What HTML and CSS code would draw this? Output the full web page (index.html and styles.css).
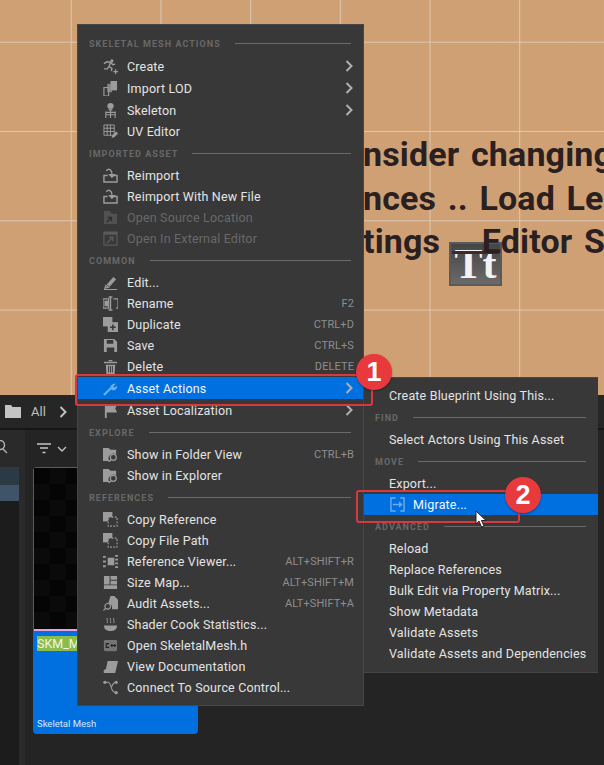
FILE: index.html
```html
<!DOCTYPE html>
<html lang="en">
<head>
<meta charset="utf-8">
<title>Asset Actions</title>
<link rel="stylesheet" href="styles.css">
</head>
<body>
<svg class="defs" width="0" height="0">
  <symbol id="i-create" viewBox="0 0 16 16"><circle cx="9.500" cy="2" r="1.700"/><path d="M1 5l3-2 4 .5 2.500 2.500 2.500-.5M8 3.500L6.500 8l3 2-.5 3M6.500 8l-2 2.500H1" fill="none" stroke-width="1.500"/><path d="M13.500 11v5M11 13.500h5" fill="none" stroke-width="1.300"/></symbol>
  <symbol id="i-lod" viewBox="0 0 16 16"><rect x="8" y="0" width="7" height="10"/><rect x="4.500" y="3" width="5" height="9" opacity=".75"/><rect x="1" y="7" width="5" height="9" fill="none" stroke-width="1.200"/></symbol>
  <symbol id="i-skel" viewBox="0 0 16 16"><ellipse cx="8" cy="3.300" rx="3.400" ry="3.200"/><rect x="6" y="6.500" width="4" height="1.500"/><path d="M3 10h10M3 12.500h10M8 8v8M3 9v7M13 9v7" fill="none" stroke-width="1.200"/></symbol>
  <symbol id="i-uv" viewBox="0 0 16 16"><path d="M1 1h11v11H1zM1 4.500h11M1 8h11M4.500 1v11M8 1v11" fill="none" stroke-width="1"/><path d="M9 15l1-3 4-4 2 2-4 4z"/></symbol>
  <symbol id="i-reimport" viewBox="0 0 16 16"><path d="M5 8H1v7h14V8h-4" fill="none" stroke-width="1.500"/><path d="M3.500 3C6 0 9.500 1.500 9.500 6" fill="none" stroke-width="1.500"/><path d="M5.500 6.500h8L9.500 11z"/></symbol>
  <symbol id="i-folderopen" viewBox="0 0 16 16"><path d="M1 1h6l2 3h6v11H1z" opacity=".75"/><path d="M4 13l5-5M5 8h4v4" fill="none" stroke="#2f2f2f" stroke-width="1.400"/></symbol>
  <symbol id="i-external" viewBox="0 0 16 16"><path d="M1 1h14v14H1z" fill="none" stroke-width="1.200"/><path d="M1 1h14v3H1z"/><path d="M4 13l6-6M6 6.500h4.500V11" fill="none" stroke-width="1.500"/></symbol>
  <symbol id="i-edit" viewBox="0 0 16 16"><path d="M4 10L11 2l3 2.500-7 8z"/><path d="M3 11l3 2-4 1zM1 15.500h14" fill="none" stroke-width="1.200"/></symbol>
  <symbol id="i-rename" viewBox="0 0 16 16"><path d="M6 3H0v10h6zM11 3h5v10h-2" fill="none" stroke-width="1.300"/><rect x="1.500" y="5" width="4" height="6"/><path d="M6 1h4M6 15h4M8 1v14" fill="none" stroke-width="1.500"/></symbol>
  <symbol id="i-dup" viewBox="0 0 16 16"><rect x="0" y="0" width="10" height="10"/><rect x="5" y="5.500" width="11" height="10.500" stroke="#383838"/><path d="M10.500 8v6M7.500 11h6" fill="none" stroke="#383838" stroke-width="1.600"/></symbol>
  <symbol id="i-save" viewBox="0 0 16 16"><path d="M1 1h11l3 3v11H1zM4 2v4h7V2zM4 10v5h8v-5z" fill-rule="evenodd"/></symbol>
  <symbol id="i-trash" viewBox="0 0 16 16"><path d="M1 3h14v1.500H1zM6 1h4v1.500H6zM3 6h10l-.6 10H3.600zM5.500 7.500v7h1v-7zM7.500 7.500v7h1v-7zM9.500 7.500v7h1v-7z" fill-rule="evenodd"/></symbol>
  <symbol id="i-wrench" viewBox="0 0 16 16"><path d="M1 15l7.500-7.500" fill="none" stroke-width="2.400"/><path d="M8 8c-1-3 2-6 6-5l-3 2.500 1.500 1.500L15 5c.5 4-3 5.500-5.500 4.500z"/></symbol>
  <symbol id="i-flag" viewBox="0 0 16 16"><path d="M2 1h2v15H2zM4 2h11l-2 3.500L15 10H4z"/></symbol>
  <symbol id="i-foldersearch" viewBox="0 0 16 16"><path d="M0 1h6l2 2h6v5a5 5 0 0 0-7 7H0z"/><circle cx="11" cy="11" r="3.200" fill="none" stroke-width="1.300"/><path d="M8.500 13.500L6 16" fill="none" stroke-width="1.500"/></symbol>
  <symbol id="i-copy" viewBox="0 0 16 16"><rect x="0" y="0" width="10" height="10"/><path d="M5.500 5.500H15V15H5.500z" fill="#383838" stroke-dasharray="2 1.500" stroke-width="1.200"/></symbol>
  <symbol id="i-refview" viewBox="0 0 16 16"><rect x="5" y="4" width="7" height="8"/><path d="M0 3h3M0 8h3M0 13h3M13 2h3M13 6h3M13 10h3M13 14h3" fill="none" stroke-width="2"/></symbol>
  <symbol id="i-sizemap" viewBox="0 0 16 16"><path d="M1 1h6v9H1zM8 1h7v4H8zM8 6h7v4H8zM1 11h14v4H1z"/></symbol>
  <symbol id="i-audit" viewBox="0 0 16 16"><path d="M8 0h4l4 4v10H9.500c1-3-1-6-4-6z"/><circle cx="5" cy="11" r="3" fill="none" stroke-width="1.200"/><path d="M3 13l-2.500 2.500" fill="none" stroke-width="1.300"/></symbol>
  <symbol id="i-shader" viewBox="0 0 16 16"><path d="M1 9h14c0 4-3 6-7 6S1 13 1 9z"/><path d="M4.500 1c-1 2 1 3 0 5.500M8 1c-1 2 1 3 0 5.500M11.500 1c-1 2 1 3 0 5.500" fill="none" stroke-width="1"/></symbol>
  <symbol id="i-cpp" viewBox="0 0 16 16"><rect x="1" y="2" width="14" height="12" rx="1.500" opacity=".6" stroke="none"/><path d="M6.500 6H3.500v4h3M8 8h6M9.500 6.500v3M12.500 6.500v3" fill="none" stroke="#222" stroke-width="1.200"/></symbol>
  <symbol id="i-doc" viewBox="0 0 16 16"><path d="M5 2h11l-2 9H3zM1 15c-1-2 0-4 2-4h11l-1 4z"/><path d="M3 13h10" stroke="#383838" fill="none"/></symbol>
  <symbol id="i-source" viewBox="0 0 16 16"><circle cx="2" cy="2.500" r="1.800"/><circle cx="14" cy="2.500" r="1.800"/><circle cx="14" cy="13.500" r="1.800"/><path d="M2 2.500h3c5 0 2 11 9 11M14 2.500C10 2.500 10 7 8.500 8" fill="none" stroke-width="1.100"/></symbol>
  <symbol id="i-migrate" viewBox="0 0 16 16"><path d="M6 1H1v14h5M11 1h4v14h-4" fill="none" stroke-width="1.500"/><path d="M3 8h8" fill="none" stroke-width="1.600"/><path d="M9.500 4.500L13.500 8l-4 3.500z"/></symbol>
  <symbol id="i-arrow" viewBox="0 0 9 12"><path d="M1.500 1l5 5-5 5" fill="none" stroke-width="2"/></symbol>
</svg>

<div class="stage">
  <section class="viewport">
    <div class="type-thumb"><span class="type-glyph">Tt</span></div>
    <div class="note">
      <p class="note-line">nsider changing</p>
      <p class="note-line">nces .. Load Le</p>
      <p class="note-line">tings <span class="note-gap">Editor S</span></p>
    </div>
  </section>

  <section class="browser">
    <header class="crumbs">
      <svg class="crumb-folder" viewBox="0 0 16 13"><path d="M0 0h6l1.500 2H16V13H0z"/></svg>
      <span class="crumb-text">All</span>
      <svg class="crumb-arrow"><use href="#i-arrow"/></svg>
    </header>
    <div class="browser-body">
      <aside class="tree">
        <div class="tree-search">
          <svg class="tree-lens" viewBox="0 0 14 14"><circle cx="0" cy="5" r="4.500"/><path d="M3 9l4 4"/></svg>
        </div>
        <div class="tree-row"></div>
        <div class="tree-row tree-row-on"></div>
      </aside>
      <div class="tree-split"></div>
      <main class="assets">
        <div class="filter-bar">
          <svg class="filter-icon" viewBox="0 0 14 11"><path d="M0 1h14M3 5h8M5.500 9.500h3"/></svg>
          <svg class="filter-caret" viewBox="0 0 10 6"><path d="M1 1l4 4 4-4"/></svg>
        </div>
        <article class="card">
          <div class="card-thumb"></div>
          <div class="card-rule"></div>
          <div class="card-info">
            <span class="card-name">SKM_Manny</span>
            <span class="card-type">Skeletal Mesh</span>
          </div>
        </article>
      </main>
    </div>
  </section>

  <nav class="menu menu-main">
    <div class="head"><span>SKELETAL MESH ACTIONS</span></div>
    <div class="row tall"><svg class="ico"><use href="#i-create"/></svg><span class="lbl">Create</span><svg class="arr"><use href="#i-arrow"/></svg></div>
    <div class="row tall"><svg class="ico"><use href="#i-lod"/></svg><span class="lbl">Import LOD</span><svg class="arr"><use href="#i-arrow"/></svg></div>
    <div class="row tall"><svg class="ico"><use href="#i-skel"/></svg><span class="lbl">Skeleton</span><svg class="arr"><use href="#i-arrow"/></svg></div>
    <div class="row"><svg class="ico"><use href="#i-uv"/></svg><span class="lbl">UV Editor</span></div>
    <div class="head"><span>IMPORTED ASSET</span></div>
    <div class="row"><svg class="ico"><use href="#i-reimport"/></svg><span class="lbl">Reimport</span></div>
    <div class="row"><svg class="ico"><use href="#i-reimport"/></svg><span class="lbl">Reimport With New File</span></div>
    <div class="row off"><svg class="ico"><use href="#i-folderopen"/></svg><span class="lbl">Open Source Location</span></div>
    <div class="row off"><svg class="ico"><use href="#i-external"/></svg><span class="lbl">Open In External Editor</span></div>
    <div class="head"><span>COMMON</span></div>
    <div class="row"><svg class="ico"><use href="#i-edit"/></svg><span class="lbl">Edit...</span></div>
    <div class="row"><svg class="ico"><use href="#i-rename"/></svg><span class="lbl">Rename</span><span class="key">F2</span></div>
    <div class="row"><svg class="ico"><use href="#i-dup"/></svg><span class="lbl">Duplicate</span><span class="key">CTRL+D</span></div>
    <div class="row"><svg class="ico"><use href="#i-save"/></svg><span class="lbl">Save</span><span class="key">CTRL+S</span></div>
    <div class="row"><svg class="ico"><use href="#i-trash"/></svg><span class="lbl">Delete</span><span class="key">DELETE</span></div>
    <div class="row tall hot"><svg class="ico"><use href="#i-wrench"/></svg><span class="lbl">Asset Actions</span><svg class="arr"><use href="#i-arrow"/></svg></div>
    <div class="row tall"><svg class="ico"><use href="#i-flag"/></svg><span class="lbl">Asset Localization</span><svg class="arr"><use href="#i-arrow"/></svg></div>
    <div class="head"><span>EXPLORE</span></div>
    <div class="row"><svg class="ico"><use href="#i-foldersearch"/></svg><span class="lbl">Show in Folder View</span><span class="key">CTRL+B</span></div>
    <div class="row"><svg class="ico"><use href="#i-foldersearch"/></svg><span class="lbl">Show in Explorer</span></div>
    <div class="head"><span>REFERENCES</span></div>
    <div class="row"><svg class="ico"><use href="#i-copy"/></svg><span class="lbl">Copy Reference</span></div>
    <div class="row"><svg class="ico"><use href="#i-copy"/></svg><span class="lbl">Copy File Path</span></div>
    <div class="row"><svg class="ico"><use href="#i-refview"/></svg><span class="lbl">Reference Viewer...</span><span class="key">ALT+SHIFT+R</span></div>
    <div class="row"><svg class="ico"><use href="#i-sizemap"/></svg><span class="lbl">Size Map...</span><span class="key">ALT+SHIFT+M</span></div>
    <div class="row"><svg class="ico"><use href="#i-audit"/></svg><span class="lbl">Audit Assets...</span><span class="key">ALT+SHIFT+A</span></div>
    <div class="row"><svg class="ico"><use href="#i-shader"/></svg><span class="lbl">Shader Cook Statistics...</span></div>
    <div class="row"><svg class="ico"><use href="#i-cpp"/></svg><span class="lbl">Open SkeletalMesh.h</span></div>
    <div class="row"><svg class="ico"><use href="#i-doc"/></svg><span class="lbl">View Documentation</span></div>
    <div class="row"><svg class="ico"><use href="#i-source"/></svg><span class="lbl">Connect To Source Control...</span></div>
  </nav>

  <nav class="menu menu-sub">
    <div class="row plain"><span class="lbl">Create Blueprint Using This...</span></div>
    <div class="head"><span>FIND</span></div>
    <div class="row plain"><span class="lbl">Select Actors Using This Asset</span></div>
    <div class="head"><span>MOVE</span></div>
    <div class="row plain"><span class="lbl">Export...</span></div>
    <div class="row plain hot migrate"><svg class="ico"><use href="#i-migrate"/></svg><span class="lbl">Migrate...</span></div>
    <div class="head"><span>ADVANCED</span></div>
    <div class="row plain"><span class="lbl">Reload</span></div>
    <div class="row plain"><span class="lbl">Replace References</span></div>
    <div class="row plain"><span class="lbl">Bulk Edit via Property Matrix...</span></div>
    <div class="row plain"><span class="lbl">Show Metadata</span></div>
    <div class="row plain"><span class="lbl">Validate Assets</span></div>
    <div class="row plain"><span class="lbl">Validate Assets and Dependencies</span></div>
  </nav>

  <div class="mark mark-one"></div>
  <div class="mark mark-two"></div>
  <div class="badge badge-one">1</div>
  <div class="badge badge-two">2</div>
  <svg class="cursor" viewBox="0 0 12 18"><path d="M1 1v13l3-3 2.500 6 2.500-1-2.500-5.500H11z"/></svg>
</div>
</body>
</html>
```

FILE: styles.css
```css
* { box-sizing: border-box; }
html, body { margin: 0; padding: 0; }
body { width: 604px; height: 765px; overflow: hidden; font-family: Roboto, "Liberation Sans", sans-serif; background: #1e1e1e; }
.defs { position: absolute; }
.stage { position: relative; width: 604px; height: 765px; display: flex; flex-direction: column; overflow: hidden; }

/* canvas */
.viewport {
  position: relative; height: 395px; flex: none;
  background-color: #cfa073;
  background-image:
    linear-gradient(90deg, transparent 0, transparent 70.500px, #dcc8b6 70.500px, #dcc8b6 72px, transparent 72px),
    linear-gradient(180deg, transparent 0, transparent 41.500px, #dcc8b6 41.500px, #dcc8b6 43px, transparent 43px),
    linear-gradient(90deg, rgba(255,255,255,.012) 0, rgba(255,255,255,.012) 1px, transparent 1px),
    linear-gradient(180deg, rgba(255,255,255,.012) 0, rgba(255,255,255,.012) 1px, transparent 1px);
  background-size: 89.7px 100%, 100% 89.3px, 9px 100%, 100% 9px;
}
.note { position: absolute; left: 363px; top: 133px; color: #2a2022; font-size: 34px; font-weight: 700; white-space: nowrap; letter-spacing: .15px; word-spacing: 3px; }
.note-line { margin: 0; height: 43.500px; line-height: 43.500px; }
.note-gap { margin-left: 30px; }
.type-thumb {
  position: absolute; left: 449px; top: 242px; width: 53px; height: 44px;
  background: linear-gradient(#454545, #6a6a6a); border: 2px solid #5a5a5a;
  display: flex; align-items: center; justify-content: center;
}
.type-thumb::after { content: ""; position: absolute; left: 1px; right: 1px; top: 7px; height: 3px; background: #3c2a28; }
.type-glyph { font-family: "Liberation Serif", serif; font-size: 42px; font-weight: 700; line-height: 1; color: #f2f2f2; }

/* content browser */
.browser { flex: 1; display: flex; flex-direction: column; background: #242424; }
.crumbs { height: 35px; flex: none; display: flex; align-items: center; padding-left: 5px; background: #262626; border-bottom: 2px solid #161616; }
.crumb-folder { width: 16px; height: 13px; fill: #c4c4c4; }
.crumb-text { margin-left: 10px; font-size: 13px; color: #c0c0c0; }
.crumb-arrow { width: 9px; height: 12px; margin-left: 13px; fill: none; stroke: #c0c0c0; }
.browser-body { flex: 1; display: flex; min-height: 0; }
.tree { width: 19px; flex: none; background: #1c1c1c; }
.tree-search { height: 37px; padding-top: 10px; background: #2a2a2a; }
.tree-lens { display: block; width: 14px; height: 14px; fill: none; stroke: #b0b0b0; stroke-width: 1.500; }
.tree-row { height: 18px; background: #2c3a46; }
.tree-row-on { height: 16px; background: #3f5468; }
.tree-split { width: 6px; flex: none; background: #2a2a2a; }
.assets { flex: 1; background: #242424; padding-left: 8px; min-width: 0; }
.filter-bar { height: 37px; display: flex; align-items: center; padding-left: 4px; gap: 6px; }
.filter-icon { width: 14px; height: 11px; fill: none; stroke: #c4c4c4; stroke-width: 1.600; }
.filter-caret { width: 10px; height: 6px; fill: none; stroke: #c4c4c4; stroke-width: 1.300; }
.card { width: 165px; height: 267px; background: #0070e0; border-radius: 4px; padding: 1px; display: flex; flex-direction: column; }
.card-thumb { height: 161px; flex: none; background-color: #050505; background-image: conic-gradient(#0a0a0a 25%, #050505 0 50%, #0a0a0a 0 75%, #050505 0); background-size: 32px 32px; }
.card-rule { height: 2px; flex: none; background: #ea9fe0; }
.card-info { flex: 1; display: flex; flex-direction: column; justify-content: space-between; padding: 5px 3px 3px 3px; min-height: 0; }
.card-name { align-self: flex-start; background: #8cbc4c; color: #f1f6e6; font-size: 12.500px; line-height: 15px; }
.card-type { color: #d8e8f8; font-size: 9.500px; line-height: 12px; }

/* menus */
.menu { position: absolute; background: #383838; border: 1px solid #464646; padding: 7px 0; display: flex; flex-direction: column; color: #e4e4e4; font-size: 12.500px; }
.menu-main { left: 77px; top: 24px; width: 287px; height: 682px; }
.menu-sub { left: 363px; top: 377px; width: 235px; height: 296px; border-right-width: 0; }
.head { height: 23px; flex: none; display: flex; align-items: center; gap: 14px; padding: 0 12px 0 11px; font-size: 9px; font-weight: 700; letter-spacing: 1.050px; color: #686868; white-space: nowrap; }
.head::after { content: ""; flex: 1; height: 1px; background: #6a6a6a; }
.row { height: 21px; flex: none; display: flex; align-items: center; padding: 0 9px 0 25px; white-space: nowrap; letter-spacing: .17px; }
.row.tall { height: 22px; }
.row.plain { padding-left: 25px; }
.ico { width: 15px; height: 15px; flex: none; margin-right: 9px; fill: #9c9c9c; stroke: #9c9c9c; stroke-width: 0; }
.lbl { flex: 1; }
.key { font-size: 11px; color: #8e8e8e; letter-spacing: .1px; }
.arr { width: 9px; height: 12px; flex: none; stroke: #b0b0b0; fill: none; }
.off { color: #686868; }
.off .ico { fill: #5a5a5a; stroke: #5a5a5a; }
.hot { background: #0070e0; color: #f0f6fc; }
.hot .ico { fill: #6aaeea; stroke: #6aaeea; }
.row.plain.migrate { padding-left: 26px; }
.migrate .ico { margin-right: 8px; }

/* annotations */
.mark { position: absolute; border: 2px solid #d6393f; border-radius: 3px; }
.mark-one { left: 75px; top: 374px; width: 298px; height: 32px; }
.mark-two { left: 356px; top: 490px; width: 164px; height: 33px; }
.badge { position: absolute; width: 36px; height: 36px; border-radius: 50%; background: #e8393d; color: #fff; font-family: "Liberation Sans", sans-serif; font-size: 27px; font-weight: 700; display: flex; align-items: center; justify-content: center; line-height: 1; box-shadow: 0 1px 2px rgba(0,0,0,.35); }
.badge-one { left: 356px; top: 354px; }
.badge-two { left: 505px; top: 477px; }
.cursor { position: absolute; left: 475px; top: 510px; width: 12px; height: 18px; fill: #fff; stroke: #222; stroke-width: 1; }
```
